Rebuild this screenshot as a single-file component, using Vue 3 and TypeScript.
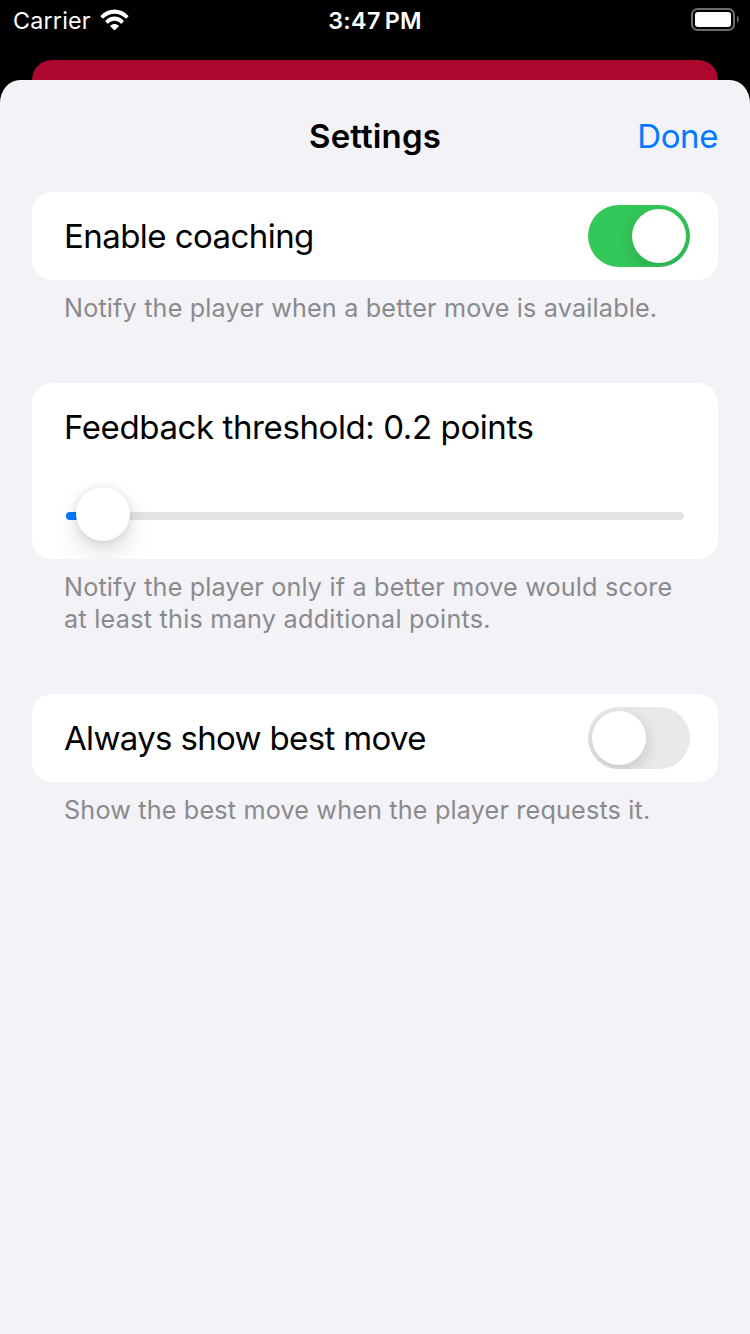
<script setup lang="ts">
import { computed, ref } from 'vue'

const coaching = ref<boolean>(true)
const showBest = ref<boolean>(false)
const threshold = ref<number>(0.2)
const thumbLeft = computed<string>(() => `${10 + (threshold.value - 0.2) * 60}px`)
</script>

<template>
  <div class="screen">
    <header class="status">
      <div class="carrier">
        <span class="carrier-name">Carrier</span>
        <svg class="wifi" width="29" height="22" viewBox="0 0 30 23">
          <path d="M0.6 7.1C8.4-1.5 21.6-1.5 29.4 7.1Q29.8 7.6 29.4 8L27.6 9.8Q27.1 10.2 26.6 9.8C20.2 3.2 9.8 3.2 3.4 9.8Q2.9 10.2 2.4 9.8L0.6 8Q0.2 7.6 0.6 7.1Z" />
          <path d="M5.5 12.2C10.8 6.5 19.2 6.5 24.5 12.2Q24.9 12.7 24.5 13.1L22.5 15.1Q22 15.5 21.5 15.1C17.8 11.4 12.2 11.4 8.5 15.1Q8 15.5 7.5 15.1L5.5 13.1Q5.1 12.7 5.5 12.2Z" />
          <path d="M10.7 17.3C13.2 15 16.8 15 19.3 17.3Q19.8 17.8 19.3 18.2L15.5 22Q15 22.4 14.5 22L10.7 18.2Q10.2 17.8 10.7 17.3Z" />
        </svg>
      </div>
      <div class="clock">3:47<span class="meridiem">PM</span></div>
      <svg class="battery" width="50" height="24" viewBox="0 0 50 24">
        <rect x="2" y="2" width="42" height="21" rx="5.5" fill="none" stroke="#6c6c6c" stroke-width="2" />
        <rect x="5" y="5" width="36" height="15" rx="3" fill="#fff" />
        <path d="M47 8.6Q48.8 9.8 48.8 12.2T47 15.8Z" fill="#6c6c6c" />
      </svg>
    </header>
    <div class="behind"></div>

    <main class="sheet">
      <div class="nav">
        <h1 class="title">Settings</h1>
        <button class="done">Done</button>
      </div>

      <section class="group">
        <div class="card row">
          <span class="label coaching">Enable coaching</span>
          <button class="switch" :class="{ on: coaching }" @click="coaching = !coaching"><i class="knob"></i></button>
        </div>
        <p class="note">Notify the player when a better move is available.</p>
      </section>

      <section class="group">
        <div class="card tall">
          <div class="label feedback">Feedback threshold: {{ threshold }} points</div>
          <div class="slider">
            <div class="track"><div class="fill"></div></div>
            <i class="thumb" :style="{ left: thumbLeft }"></i>
          </div>
        </div>
        <p class="note">
          Notify the player only if a better move would score<br />
          <span class="second">at least this many additional points.</span>
        </p>
      </section>

      <section class="group">
        <div class="card row">
          <span class="label best">Always show best move</span>
          <button class="switch" :class="{ on: showBest }" @click="showBest = !showBest"><i class="knob"></i></button>
        </div>
        <p class="note">Show the best move when the player requests it.</p>
      </section>
    </main>
  </div>
</template>

<style>
body {
  margin: 0;
  background: #000;
}
</style>

<style scoped>
.screen {
  width: 750px;
  height: 1334px;
  display: flex;
  flex-direction: column;
  background: #000;
  overflow: hidden;
  font-family: Inter, "Liberation Sans", sans-serif;
}
.screen * {
  box-sizing: border-box;
}
button {
  border: 0;
  padding: 0;
  background: none;
  font: inherit;
}
.status {
  height: 60px;
  flex: none;
  display: grid;
  grid-template-columns: 1fr auto 1fr;
  align-items: start;
  padding: 0 11px 0 13px;
  color: #fff;
  font-size: 23.3px;
  line-height: 42px;
}
.carrier {
  display: flex;
  align-items: flex-start;
}
.carrier-name {
  width: 87px;
  letter-spacing: 0.2px;
}
.wifi {
  margin-top: 9px;
  fill: #fff;
}
.clock {
  margin-left: -2px;
  font-weight: 600;
  letter-spacing: 0.3px;
}
.meridiem {
  margin-left: 4px;
}
.battery {
  justify-self: end;
  margin: 7px -1px 0 0;
}
.behind {
  height: 20px;
  flex: none;
  margin: 0 32px;
  border-radius: 20px 20px 0 0;
  background: #ae072d;
}
.sheet {
  flex: 1;
  padding: 0 32px;
  border-radius: 20px 20px 0 0 / 23px 23px 0 0;
  background: #f2f2f7;
}
.nav {
  height: 112px;
  display: grid;
  grid-template-columns: 1fr auto 1fr;
  align-items: center;
}
.title {
  grid-column: 2;
  margin: 0;
  font-size: 33px;
  font-weight: 600;
  line-height: 40px;
  letter-spacing: 0.12px;
}
.done {
  justify-self: end;
  color: #007aff;
  font-size: 33px;
  line-height: 40px;
  letter-spacing: -0.4px;
}
.group {
  margin-bottom: 59px;
}
.card {
  border-radius: 20px;
  background: #fff;
  overflow: hidden;
}
.row {
  height: 88px;
  display: flex;
  align-items: center;
  justify-content: space-between;
  padding: 0 28px 0 32px;
}
.label {
  font-size: 33px;
  line-height: 88px;
  color: #000;
  white-space: nowrap;
}
.coaching {
  letter-spacing: -0.56px;
}
.feedback {
  letter-spacing: -0.4px;
}
.best {
  letter-spacing: -0.66px;
}
.tall {
  height: 176px;
  padding: 0 32px;
}
.note {
  margin: 0;
  padding: 12px 0 0 32px;
  font-size: 25.2px;
  line-height: 32px;
  letter-spacing: 0.17px;
  color: #8a8a8e;
  white-space: nowrap;
}
.second {
  letter-spacing: 0.25px;
}
.switch {
  width: 102px;
  height: 62px;
  padding: 4px;
  display: flex;
  border-radius: 31px;
  background: #e9e9eb;
  overflow: hidden;
}
.switch.on {
  justify-content: flex-end;
  background: #34c759;
}
.knob {
  width: 54px;
  height: 54px;
  border-radius: 50%;
  background: #fff;
  box-shadow: 0 5px 16px rgba(0, 0, 0, 0.16);
}
.slider {
  position: relative;
  height: 88px;
  margin: 0 2px;
  padding-top: 41px;
}
.track {
  height: 8px;
  border-radius: 4px;
  background: #e4e4e6;
  overflow: hidden;
}
.fill {
  width: 6%;
  height: 8px;
  background: #007aff;
}
.thumb {
  position: absolute;
  top: 16px;
  width: 54px;
  height: 54px;
  border-radius: 50%;
  background: #fff;
  box-shadow: 0 12px 26px rgba(0, 0, 0, 0.13), 0 1px 8px rgba(0, 0, 0, 0.12);
}
</style>
